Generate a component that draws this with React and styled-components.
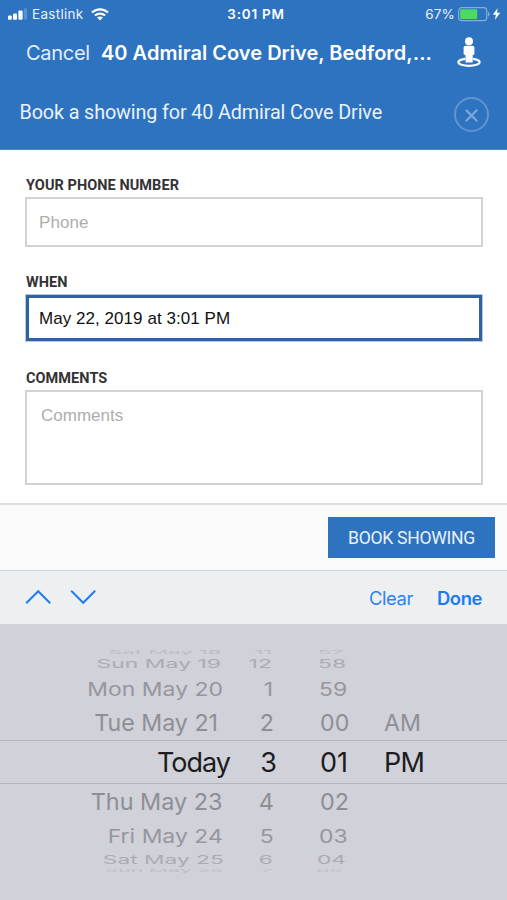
import { useState } from "react";
import styled, { createGlobalStyle } from "styled-components";

const GlobalStyle = createGlobalStyle`
  * {
    box-sizing: border-box;
  }
  body {
    margin: 0;
    background: #ffffff;
    font-family: Inter, "Liberation Sans", sans-serif;
  }
`;

const Screen = styled.div`
  width: 507px;
  height: 900px;
  display: flex;
  flex-direction: column;
  overflow: hidden;
  background: #ffffff;
`;

/* ---------- header ---------- */
const Header = styled.header`
  height: 150px;
  flex: none;
  background: #2e73bf;
  border-bottom: 1px solid #5288c8;
  color: #fff;
`;

const StatusBar = styled.div`
  height: 28px;
  padding: 0 6px 0 8px;
  display: grid;
  grid-template-columns: 1fr auto 1fr;
  align-items: center;
  font-size: 13.5px;
  line-height: 28px;
  color: #e9f1fb;
`;

const StatusGroup = styled.div`
  display: flex;
  align-items: center;
  justify-content: ${(props) => (props.$end ? "flex-end" : "flex-start")};
`;

const Carrier = styled.span`
  margin: 0 7px 0 5px;
  letter-spacing: 0.3px;
`;

const Clock = styled.span`
  padding-left: 3px;
  font-weight: 600;
  color: #fff;
  letter-spacing: 0.75px;
`;

const Percent = styled.span`
  margin-right: 3px;
  letter-spacing: 0.2px;
`;

const NavBar = styled.div`
  height: 48px;
  padding: 1px 26px 0 26px;
  display: flex;
  align-items: center;
  font-size: 20px;
  line-height: 48px;
  white-space: nowrap;
`;

const Cancel = styled.span`
  width: 75px;
  color: #e3eefa;
  letter-spacing: -0.3px;
`;

const Title = styled.span`
  flex: 1;
  font-weight: 600;
  letter-spacing: 0.02px;
`;

const SubHeader = styled.div`
  height: 73px;
  padding: 0 18px 0 19.5px;
  display: flex;
  align-items: center;
  justify-content: space-between;
  font-family: Roboto, sans-serif;
  font-size: 19.8px;
  letter-spacing: -0.13px;
  color: #e9f1fb;
  white-space: nowrap;
`;

const SubTitle = styled.span`
  padding-bottom: 1px;
`;

const CloseButton = styled.button`
  width: 35px;
  height: 35px;
  margin-top: 4px;
  padding: 2px 0 0;
  display: flex;
  align-items: center;
  justify-content: center;
  border: 2px solid #5f94d2;
  border-radius: 50%;
  background: none;
`;

/* ---------- form ---------- */
const Form = styled.form`
  height: 353px;
  flex: none;
  padding: 26px 24px 0 25px;
  display: flex;
  flex-direction: column;
`;

const Label = styled.label`
  height: 21px;
  padding-left: 1px;
  font-family: Roboto, sans-serif;
  font-size: 14.5px;
  font-weight: 700;
  line-height: 19px;
  letter-spacing: 0.06px;
  color: #333;
`;

const Input = styled.input`
  height: ${(props) => (props.$active ? "46px" : "50px")};
  margin: ${(props) => (props.$active ? "1px 1px 28px" : "0 0 26px")};
  padding: 2px ${(props) => (props.$active ? "10px" : "12px")} 0;
  border: ${(props) =>
    props.$active ? "3px solid #2f629e" : "2px solid #d2d2d2"};
  box-shadow: ${(props) => (props.$active ? "0 0 0 1px #b9c9dc" : "none")};
  border-radius: 0;
  outline: none;
  background: #fff;
  font-family: "Liberation Sans", Arial, sans-serif;
  font-size: 17px;
  letter-spacing: 0.05px;
  color: #111;
  &::placeholder {
    color: #adadad;
  }
`;

const TextArea = styled.textarea`
  height: 95px;
  padding: 14px 14px;
  border: 2px solid #d2d2d2;
  border-radius: 0;
  outline: none;
  resize: none;
  font-family: "Liberation Sans", Arial, sans-serif;
  font-size: 17px;
  line-height: 20px;
  &::placeholder {
    color: #adadad;
  }
`;

const Footer = styled.div`
  height: 67px;
  flex: none;
  padding: 12px 12px 0 0;
  display: flex;
  justify-content: flex-end;
  align-items: flex-start;
  background: #fafafa;
  border-top: 2px solid #dfdfdf;
`;

const BookButton = styled.button`
  width: 167px;
  height: 41px;
  padding: 0;
  border: none;
  background: #2e73bf;
  color: #e9f1fb;
  font-family: Roboto, sans-serif;
  font-size: 17.6px;
  letter-spacing: -0.3px;
  white-space: nowrap;
`;

/* ---------- keyboard accessory ---------- */
const Accessory = styled.div`
  height: 54px;
  flex: none;
  padding: 0 25px 0 25px;
  display: flex;
  align-items: center;
  background: #edeff1;
  border-top: 1px solid #d3d5d7;
`;

const Arrows = styled.div`
  flex: 1;
  display: flex;
  gap: 19px;
  padding-bottom: 1px;
`;

const TextButton = styled.button`
  margin-left: 24px;
  padding: 0;
  border: none;
  background: none;
  font-family: Inter, sans-serif;
  font-size: 18.4px;
  font-weight: ${(props) => (props.$strong ? 600 : 400)};
  letter-spacing: -0.4px;
  color: ${(props) => (props.$strong ? "#1a7cf5" : "#2f83f2")};
`;

/* ---------- wheel picker ---------- */
const Wheel = styled.div`
  flex: 1;
  padding-top: 24px;
  background: #d0d1d9;
`;

const WheelRow = styled.div`
  height: ${(props) => props.$height}px;
  display: grid;
  grid-template-columns: 231px 46px 107px 123px;
  align-items: center;
  font-size: ${(props) => props.$size}px;
  line-height: ${(props) => props.$height}px;
  color: ${(props) => props.$color};
  border: solid #b4b5bc;
  border-width: ${(props) => (props.$selected ? "1px 0" : "0")};
  padding-top: ${(props) => props.$drop || 0}px;
  white-space: nowrap;
`;

const Cell = styled.span`
  display: flex;
  align-items: center;
  justify-content: ${(props) => (props.$left ? "flex-start" : "flex-end")};
  height: 0;
  padding-right: ${(props) => props.$inset || 0}px;
  padding-left: ${(props) => props.$indent || 0}px;
  letter-spacing: ${(props) => props.$track || 0}px;
`;

const Face = styled.span`
  display: block;
  transform: scale(${(props) => props.$x}, ${(props) => props.$y});
  transform-origin: ${(props) => (props.$left ? "left" : "right")} center;
`;

// each row is a slice of the drum: it gets flatter towards the edges
const rows = [
  { day: "Sat May 18", hour: "11", minute: "57", height: 8, size: 22.5, x: 0.98, y: 0.2, color: "#bcbdc4", inset: 10, hourInset: 5, indent: 41 },
  { day: "Sun May 19", hour: "12", minute: "58", height: 16, size: 22.5, x: 1.02, y: 0.53, color: "#abacb3", inset: 10, hourInset: 5, indent: 41 },
  { day: "Mon May 20", hour: "1", minute: "59", height: 33, size: 22.5, x: 1.02, y: 0.83, color: "#96979d", inset: 8, hourInset: 4, indent: 42 },
  { day: "Tue May 21", hour: "2", minute: "00", period: "AM", height: 35, size: 23.2, x: 1, y: 1, color: "#8e8f95", inset: 13, hourInset: 3, indent: 43, drop: 2 },
  { day: "Today", hour: "3", minute: "01", period: "PM", height: 44, size: 27, x: 1, y: 1, color: "#1d1d20", inset: 1, hourInset: 0, indent: 43, track: -1, drop: 1, selected: true },
  { day: "Thu May 23", hour: "4", minute: "02", height: 36, size: 23.2, x: 1.01, y: 1, color: "#8e8f95", inset: 8, hourInset: 3, indent: 43 },
  { day: "Fri May 24", hour: "5", minute: "03", height: 31, size: 22.5, x: 1.02, y: 0.83, color: "#96979d", inset: 8, hourInset: 3, indent: 42 },
  { day: "Sat May 25", hour: "6", minute: "04", height: 17, size: 22.5, x: 1.01, y: 0.53, color: "#abacb3", inset: 7, hourInset: 4, indent: 40 },
  { day: "Sun May 26", hour: "7", minute: "05", height: 6, size: 22.5, x: 0.94, y: 0.18, color: "#bebfc6", inset: 7, hourInset: 4, indent: 39 },
];

/* ---------- icons ---------- */
function SignalIcon() {
  return (
    <svg width="19" height="12" viewBox="0 0 19 12" fill="#fff">
      <rect x="0" y="7.5" width="3.8" height="4.2" rx="1" />
      <rect x="5" y="5.5" width="4" height="6.2" rx="1" />
      <rect x="10.4" y="2.6" width="4.2" height="9.1" rx="1" />
      <rect x="15.8" y="0.3" width="3.2" height="11.4" rx="1" opacity="0.22" />
    </svg>
  );
}

function WifiIcon() {
  return (
    <svg width="18" height="13" viewBox="0 0 18 13" fill="none" stroke="#fff">
      <path d="M1 4.6C5.4 0.3 12.6 0.3 17 4.6" strokeWidth="2.1" />
      <path d="M3.9 7.6C6.8 4.9 11.2 4.9 14.1 7.6" strokeWidth="2.1" />
      <path d="M9 12.4L6.1 9.6C7.7 8.2 10.3 8.2 11.9 9.6Z" fill="#fff" stroke="none" />
    </svg>
  );
}

function BatteryIcon() {
  return (
    <svg width="34" height="15" viewBox="0 0 34 15">
      <rect x="0.7" y="0.7" width="28" height="13" rx="3" fill="none" stroke="#86aedd" strokeWidth="1.2" />
      <rect x="2.2" y="2.2" width="17" height="9.8" rx="1" fill="#4cd964" />
      <path d="M30 5C32 5.4 32 9 30 9.4Z" fill="#86aedd" />
    </svg>
  );
}

function BoltIcon() {
  return (
    <svg width="9" height="12" viewBox="0 0 9 12" fill="#fff">
      <path d="M5.8 0L0.8 6.8H3.9L2.9 12L8.2 4.8H4.9Z" />
    </svg>
  );
}

function StreetViewIcon() {
  return (
    <svg width="24" height="31" viewBox="0 0 24 31" fill="#fff">
      <ellipse cx="12" cy="25.2" rx="10.6" ry="3.6" fill="none" stroke="#fff" strokeWidth="2.2" />
      <circle cx="12" cy="4.2" r="4" />
      <path
        d="M8.6 8.8H15.4Q17.4 8.8 17.4 10.6V17Q17.4 18 15.7 18V25.4H8.5V18Q6.6 18 6.6 17V10.6Q6.6 8.8 8.6 8.8Z"
        stroke="#2e73bf"
        strokeWidth="0.8"
        paintOrder="stroke"
      />
    </svg>
  );
}

function CloseIcon() {
  return (
    <svg width="13" height="13" viewBox="0 0 13 13" fill="none" stroke="#7ea8dc" strokeWidth="2.1">
      <path d="M0.8 0.8L12.2 12.2M12.2 0.8L0.8 12.2" />
    </svg>
  );
}

function Chevron({ down }) {
  return (
    <svg width="26" height="16" viewBox="0 0 26 16" fill="none" stroke="#1f7df3" strokeWidth="2">
      <path d={down ? "M1.2 1.8L13.2 13.8L25.2 1.8" : "M1.2 14.2L13.2 2.2L25.2 14.2"} />
    </svg>
  );
}

function PickerRow({ row }) {
  const { day, hour, minute, period, height, size, x, y, color } = row;
  return (
    <WheelRow
      $height={height}
      $size={size}
      $color={color}
      $drop={row.drop}
      $selected={row.selected}
    >
      <Cell $inset={row.inset} $track={row.track}>
        <Face $x={x} $y={y}>{day}</Face>
      </Cell>
      <Cell $inset={row.hourInset}>
        <Face $x={x} $y={y}>{hour}</Face>
      </Cell>
      <Cell $left $indent={row.indent}>
        <Face $left $x={x} $y={y}>{minute}</Face>
      </Cell>
      <Cell $left $track={row.selected ? -0.8 : 0}>
        {period && <Face $left $x={x} $y={y}>{period}</Face>}
      </Cell>
    </WheelRow>
  );
}

function App() {
  const [phone, setPhone] = useState("");
  const [when, setWhen] = useState("May 22, 2019 at 3:01 PM");
  const [comments, setComments] = useState("");

  return (
    <Screen>
      <GlobalStyle />
      <Header>
        <StatusBar>
          <StatusGroup>
            <SignalIcon />
            <Carrier>Eastlink</Carrier>
            <WifiIcon />
          </StatusGroup>
          <Clock>3:01 PM</Clock>
          <StatusGroup $end>
            <Percent>67%</Percent>
            <BatteryIcon />
            <BoltIcon />
          </StatusGroup>
        </StatusBar>
        <NavBar>
          <Cancel>Cancel</Cancel>
          <Title>40 Admiral Cove Drive, Bedford,...</Title>
          <StreetViewIcon />
        </NavBar>
        <SubHeader>
          <SubTitle>Book a showing for 40 Admiral Cove Drive</SubTitle>
          <CloseButton type="button">
            <CloseIcon />
          </CloseButton>
        </SubHeader>
      </Header>

      <Form>
        <Label>YOUR PHONE NUMBER</Label>
        <Input placeholder="Phone" value={phone} onChange={(e) => setPhone(e.target.value)} />
        <Label>WHEN</Label>
        <Input $active value={when} onChange={(e) => setWhen(e.target.value)} />
        <Label>COMMENTS</Label>
        <TextArea
          placeholder="Comments"
          value={comments}
          onChange={(e) => setComments(e.target.value)}
        />
      </Form>
      <Footer>
        <BookButton type="button">BOOK SHOWING</BookButton>
      </Footer>

      <Accessory>
        <Arrows>
          <Chevron />
          <Chevron down />
        </Arrows>
        <TextButton>Clear</TextButton>
        <TextButton $strong>Done</TextButton>
      </Accessory>
      <Wheel>
        {rows.map((row) => (
          <PickerRow key={row.day} row={row} />
        ))}
      </Wheel>
    </Screen>
  );
}

export default App;
